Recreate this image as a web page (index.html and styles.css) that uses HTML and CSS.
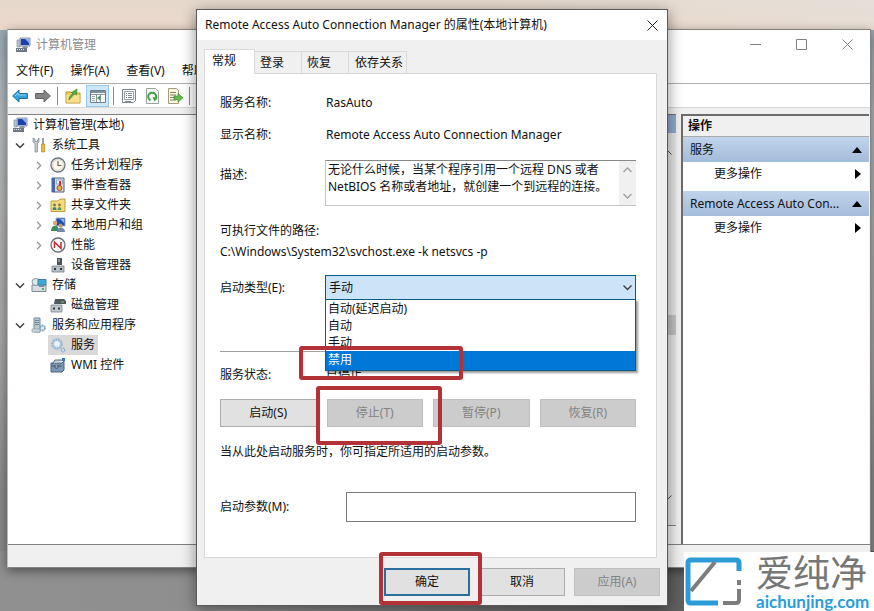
FILE: index.html
```html
<!DOCTYPE html>
<html lang="zh-CN">
<head>
<meta charset="utf-8">
<title>计算机管理</title>
<link rel="stylesheet" href="styles.css">
</head>
<body>
<svg class="defs" aria-hidden="true">
  <defs>
    <symbol id="i-computer" viewBox="0 0 16 16">
      <path d="M5 1h10v8H5z" fill="#c9d3e2" stroke="#6f7f98" stroke-width=".8"/>
      <path d="M6 2h8v6H6z" fill="#1f3fae"/><path d="M10 2h4v4z" fill="#86aef0"/>
      <path d="M8 9h4l1 2H7z" fill="#8d97a5"/>
      <path d="M2 3h3v7H2z" fill="#b7c3d2" stroke="#76879a" stroke-width=".6"/>
      <path d="M1 11h11v4H1z" fill="#6c7886"/><path d="M2 12h1v1H2zM4 12h1v1H4zM6 12h1v1H6zM8 12h1v1H8zM3 14h6" fill="#e7edf3"/>
    </symbol>
    <symbol id="i-open" viewBox="0 0 12 9"><path d="M2 2.500l4 4 4-4" fill="none" stroke="#404040" stroke-width="1.500"/></symbol>
    <symbol id="i-shut" viewBox="0 0 12 9"><path d="M4 .8l3.700 3.700L4 8.200" fill="none" stroke="#9a9a9a" stroke-width="1.300"/></symbol>
  </defs>
</svg>

<main class="desktop">
  <section class="console" aria-label="计算机管理">
    <header class="console-title">
      <svg class="icon"><use href="#i-computer"/></svg>
      <h1>计算机管理</h1>
      <div class="controls">
        <button aria-label="最小化"><svg viewBox="0 0 11 11"><path d="M0 5.500h11"/></svg></button>
        <button aria-label="最大化"><svg viewBox="0 0 11 11"><path d="M.5.5h10v10H.5z"/></svg></button>
        <button aria-label="关闭"><svg viewBox="0 0 11 11"><path d="M.5.5l10 10M10.500.5l-10 10"/></svg></button>
      </div>
    </header>
    <nav class="menubar">
      <button>文件(F)</button><button>操作(A)</button><button>查看(V)</button><button>帮助(H)</button>
    </nav>
    <div class="toolbar">
      <button aria-label="后退"><svg viewBox="0 0 16 16"><path d="M.6 8l6.400-6v3.500h8.400v5H7V14z" fill="#35a4dd" stroke="#1d6d9f"/><path d="M3 8l3-3v2h8" fill="none" stroke="#8ad4f6"/></svg></button>
      <button aria-label="前进"><svg viewBox="0 0 16 16"><path d="M15.400 8L9 2v3.500H.6v5H9V14z" fill="#858585" stroke="#606060"/></svg></button>
      <span class="rule"></span>
      <button aria-label="上一级"><svg viewBox="0 0 16 16"><path d="M1 4h5l1 1h8v10H1z" fill="#f0d064" stroke="#b89435"/><path d="M1.500 7h13v7.500h-13z" fill="#f8e08a"/><path d="M4 12c0-4 2-5 4-6L6.500 4.500 12 1l-.5 6L10 6c-2 1-3.500 3-6 6z" fill="#55ad3c" stroke="#2f7c22" stroke-width=".6"/></svg></button>
      <button class="on" aria-label="显示/隐藏控制台树"><svg viewBox="0 0 16 16"><path d="M.5 2.500h15v12H.5z" fill="#fff" stroke="#6e7c88"/><path d="M1 3h14v2H1z" fill="#7d8e9d"/><path d="M1 6.500h14M6.500 6.500v8M10.500 6.500v8" stroke="#8795a1"/><path d="M2 8.500h3M2 10.500h3M2 12.500h3" stroke="#9aa6b0"/><path d="M10 7.500v5L7 10z" fill="#3da438"/></svg></button>
      <span class="rule"></span>
      <button aria-label="属性"><svg viewBox="0 0 16 16"><path d="M1.500 1.500h13v11l-2 2h-11z" fill="#f4f6f8" stroke="#7d868e"/><path d="M3.500 3.500h9v8h-9z" fill="#fff" stroke="#98a1a9"/><path d="M5 5.500h1M7 5.500h4M5 7.500h1M7 7.500h4M5 9.500h1M7 9.500h4M4 13.500h6" stroke="#7d868e"/></svg></button>
      <button aria-label="刷新"><svg viewBox="0 0 16 16"><path d="M2.500.5h9l3 3v12h-12z" fill="#f6f8f6" stroke="#9aa29a"/><path d="M6.500 12.300A4 4 0 1 1 11 11.500" fill="none" stroke="#3fa047" stroke-width="2"/><path d="M8.500 9l5 .5-3 4z" fill="#3fa047"/></svg></button>
      <button aria-label="导出列表"><svg viewBox="0 0 16 16"><path d="M1.500.5h8l2 2v13h-10z" fill="#fbf8e6" stroke="#a39c74"/><path d="M3 4.500h6M3 7h6M3 9.500h4M3 12h6" stroke="#857e5b"/><path d="M7 8h4V5.500l5 4.200-5 4.300v-2.500H7z" fill="#5fbb4b" stroke="#3b8d2c" stroke-width=".6"/></svg></button>
      <span class="rule"></span>
    </div>

    <div class="panes">
      <ul class="tree">
        <li><svg class="icon"><use href="#i-computer"/></svg>计算机管理(本地)</li>
        <li class="l1"><svg class="twist"><use href="#i-open"/></svg><svg class="icon" viewBox="0 0 16 16"><path d="M2 1v4l2 1.500V15h2.500V6.500L8 5V1L6.500 3v1.500h-2.500V2z" fill="#c3c9ce" stroke="#7b848c" stroke-width=".7"/><path d="M11 1h2v6h-2z" fill="#98a1a8"/><path d="M10.500 7h3v8h-3z" fill="#efb638" stroke="#b07c1b" stroke-width=".6"/></svg>系统工具</li>
        <li class="l2"><svg class="twist"><use href="#i-shut"/></svg><svg class="icon" viewBox="0 0 16 16"><circle cx="8" cy="8" r="7" fill="#e9edf2" stroke="#6d7580" stroke-width="1.300"/><circle cx="8" cy="8" r="5.300" fill="#fff8e4" stroke="#c9c6b6" stroke-width=".6"/><path d="M8 4v4.500h3.500" fill="none" stroke="#5c6370" stroke-width="1.200"/></svg>任务计划程序</li>
        <li class="l2"><svg class="twist"><use href="#i-shut"/></svg><svg class="icon" viewBox="0 0 16 16"><path d="M2 1h12v14H2z" fill="#d5dfea" stroke="#53637d"/><path d="M2 1h3v14H2z" fill="#4966a5"/><path d="M6.500 3h6v4h-6z" fill="#eaf0f7" stroke="#7289ad" stroke-width=".6"/><path d="M9 4h2v5H9z" fill="#cf342c"/><circle cx="9.500" cy="11" r="2.500" fill="#e5b44c" stroke="#b94434"/></svg>事件查看器</li>
        <li class="l2"><svg class="twist"><use href="#i-shut"/></svg><svg class="icon" viewBox="0 0 16 16"><path d="M1 4h7l2-2h5v12.500H1z" fill="#f4dd7c" stroke="#bd9d43"/><circle cx="4.500" cy="8" r="1.400" fill="#687b57"/><path d="M2.500 13c0-4 4-4 4 0z" fill="#467b8a"/><circle cx="9.500" cy="8" r="1.400" fill="#9a7440"/><path d="M7.500 13c0-4 4-4 4 0z" fill="#5c9650"/></svg>共享文件夹</li>
        <li class="l2"><svg class="twist"><use href="#i-shut"/></svg><svg class="icon" viewBox="0 0 16 16"><path d="M6 1h9v8H6z" fill="#244cae" stroke="#9aabc8"/><path d="M10 2h4v4z" fill="#8eb4ee"/><circle cx="5" cy="6" r="2.300" fill="#d7a774"/><path d="M1 14c0-7 8-7 8 0z" fill="#3c8b5a"/><circle cx="10.500" cy="8.500" r="2" fill="#c99864"/><path d="M7 15c0-6 8-6 8 0z" fill="#7487ad"/></svg>本地用户和组</li>
        <li class="l2"><svg class="twist"><use href="#i-shut"/></svg><svg class="icon" viewBox="0 0 16 16"><circle cx="8" cy="8" r="7" fill="#f6f6f6" stroke="#686e76" stroke-width="1.300"/><path d="M4.500 11V5l6.500 6.500V5" fill="none" stroke="#c22e32" stroke-width="1.500"/></svg>性能</li>
        <li class="l2"><i class="twist"></i><svg class="icon" viewBox="0 0 16 16"><path d="M7 1h5v7H7z" fill="#4b5258"/><path d="M8 2h2v3H8z" fill="#89929a"/><path d="M2 9h12v6H2z" fill="#b8bfc6" stroke="#757d86" stroke-width=".8"/><path d="M4 11h2v2H4zM10 11h2v2h-2z" fill="#30363b"/></svg>设备管理器</li>
        <li class="l1"><svg class="twist"><use href="#i-open"/></svg><svg class="icon" viewBox="0 0 16 16"><path d="M1 8h14v6.500H1z" fill="#d5dce2" stroke="#7c8c99"/><ellipse cx="5" cy="5" rx="4" ry="3.500" fill="#dfe6ea" stroke="#8a98a2"/><path d="M7 2.500h8v5.500H7z" fill="#3fa9d6" stroke="#337fa8"/><path d="M8 8.500h5v1.500H8z" fill="#7b8b97"/><path d="M11 12h2" stroke="#2da049" stroke-width="1.500"/></svg>存储</li>
        <li class="l2"><i class="twist"></i><svg class="icon" viewBox="0 0 16 16"><path d="M5 2h9l2 2v3H4z" fill="#50575d"/><path d="M11 5h3" stroke="#67cd74"/><path d="M1 8h11v7H1z" fill="#bfc6cc" stroke="#7c848c" stroke-width=".8"/><path d="M3 10.500h2v2H3zM8 10.500h2v2H8z" fill="#30363b"/></svg>磁盘管理</li>
        <li class="l1"><svg class="twist"><use href="#i-open"/></svg><svg class="icon" viewBox="0 0 16 16"><path d="M3 1h6v14H3z" fill="#b8c8d3" stroke="#74899a"/><path d="M4 3.500h4M4 5.500h4M4 7.500h4" stroke="#6f8798"/><path d="M1 12h8v3H1z" fill="#cdd7df" stroke="#8496a3" stroke-width=".6"/><circle cx="11.500" cy="11" r="2.500" fill="#e5eef5" stroke="#7da3be" stroke-width="1.800" stroke-dasharray="2 .6"/></svg>服务和应用程序</li>
        <li class="l2"><i class="twist"></i><span class="picked"><svg class="icon" viewBox="0 0 16 16"><circle cx="7" cy="7" r="4.500" fill="#dcebf5" stroke="#92b6d0" stroke-width="2.500" stroke-dasharray="2 .7"/><circle cx="7" cy="7" r="3.500" fill="#eaf3f9" stroke="#a6c4d8"/><circle cx="13" cy="13" r="1.700" fill="#dcebf5" stroke="#86aac4" stroke-width="1.400" stroke-dasharray="1.300 .5"/></svg>服务</span></li>
        <li class="l2"><i class="twist"></i><svg class="icon" viewBox="0 0 16 16"><path d="M1 6h11l2-2v9l-2 2H1z" fill="#7d98b4" stroke="#4b627a"/><path d="M3 6l2-3h7l2 1" fill="#c7d5e1" stroke="#51677e"/><path d="M1.500 9h10M5 8v3h3V8" fill="#e4ecf2" stroke="#3d5268"/><path d="M12 1h3v3h-3z" fill="#3577ba"/></svg>WMI 控件</li>
      </ul>

      <div class="listing" aria-hidden="true">
        <div class="listing-head"></div>
        <div class="listing-scroll">
          <svg viewBox="0 0 9 6"><path d="M.5 5.500l4-4 4 4"/></svg>
          <span></span>
          <svg viewBox="0 0 9 6"><path d="M.5.5l4 4 4-4"/></svg>
        </div>
        <div class="listing-foot"></div>
      </div>

      <aside class="actions">
        <h2>操作</h2>
        <h3><span>服务</span><svg viewBox="0 0 10 6"><path d="M0 6l5-6 5 6z"/></svg></h3>
        <button>更多操作<svg viewBox="0 0 6 10"><path d="M0 0l6 5-6 5z"/></svg></button>
        <h3><span>Remote Access Auto Con...</span><svg viewBox="0 0 10 6"><path d="M0 6l5-6 5 6z"/></svg></h3>
        <button>更多操作<svg viewBox="0 0 6 10"><path d="M0 0l6 5-6 5z"/></svg></button>
      </aside>
    </div>
    <footer class="statusbar"></footer>
  </section>

  <form class="dialog" role="dialog" aria-labelledby="dlg-title">
    <header class="dialog-title">
      <h2 id="dlg-title">Remote Access Auto Connection Manager 的属性(本地计算机)</h2>
      <button type="button" aria-label="关闭"><svg viewBox="0 0 11 11"><path d="M.5.5l10 10M10.500.5l-10 10"/></svg></button>
    </header>
    <div class="tabs" role="tablist">
      <button type="button" role="tab" aria-selected="true">常规</button>
      <button type="button" role="tab" aria-selected="false">登录</button>
      <button type="button" role="tab" aria-selected="false">恢复</button>
      <button type="button" role="tab" aria-selected="false">依存关系</button>
    </div>
    <div class="sheet">
      <div class="row"><span>服务名称:</span><span>RasAuto</span></div>
      <div class="row name"><span>显示名称:</span><span>Remote Access Auto Connection Manager</span></div>
      <div class="row about">
        <label for="desc">描述:</label>
        <div class="memo">
          <textarea id="desc" readonly>无论什么时候，当某个程序引用一个远程 DNS 或者 NetBIOS 名称或者地址，就创建一个到远程的连接。</textarea>
          <div class="memo-scroll"><svg viewBox="0 0 9 6"><path d="M.5 5l4-4 4 4"/></svg><svg viewBox="0 0 9 6"><path d="M.5 1l4 4 4-4"/></svg></div>
        </div>
      </div>
      <p class="path-label">可执行文件的路径:</p>
      <p class="path">C:\Windows\System32\svchost.exe -k netsvcs -p</p>
      <div class="row start">
        <label for="start">启动类型(E):</label>
        <div class="combo">
          <select id="start"><option>手动</option></select>
          <svg class="drop" viewBox="0 0 9 6"><path d="M.5.5l4 4 4-4"/></svg>
          <ul class="choices" role="listbox">
            <li role="option">自动(延迟启动)</li>
            <li role="option">自动</li>
            <li role="option">手动</li>
            <li role="option" aria-selected="true">禁用</li>
          </ul>
          <span class="mark mark-choice"></span>
        </div>
      </div>
      <hr>
      <div class="row"><span>服务状态:</span><span>已停止</span></div>
      <div class="service-buttons">
        <button type="button">启动(S)</button>
        <span class="marked"><button type="button" disabled>停止(T)</button><span class="mark mark-stop"></span></span>
        <button type="button" disabled>暂停(P)</button>
        <button type="button" disabled>恢复(R)</button>
      </div>
      <p class="hint">当从此处启动服务时，你可指定所适用的启动参数。</p>
      <div class="row params"><label for="params">启动参数(M):</label><input id="params" type="text"></div>
    </div>
    <footer class="dialog-foot">
      <span class="marked"><button type="button" class="ok">确定</button><span class="mark mark-ok"></span></span>
      <button type="button">取消</button>
      <button type="button" disabled>应用(A)</button>
    </footer>
  </form>

  <div class="brand">
    <svg viewBox="0 0 58 50">
      <path d="M54 14V6q0-3-3-3H6Q3 3 3 6v37q0 3 3 3h27" fill="none" stroke="#2b9cd8" stroke-width="5"/>
      <path d="M38 46h13q3 0 3-3V32M54 28v-5M6 34L30 5" fill="none" stroke="#7d7d7d" stroke-width="4"/>
    </svg>
    <div><strong>爱纯净</strong><span>aichunjing.com</span></div>
  </div>
</main>
</body>
</html>
```

FILE: styles.css
```css
* { box-sizing: border-box; margin: 0; padding: 0; }
body {
  font: 12px/16px "Noto Sans", "Noto Sans CJK SC", sans-serif;
  color: #111;
}
button, input, select, textarea { font: inherit; color: inherit; border: 0; background: none; border-radius: 0; }
ul { list-style: none; }
h1, h2, h3 { font: inherit; }
.defs { position: absolute; width: 0; height: 0; }

.desktop {
  position: relative;
  min-height: 100vh;
  overflow: hidden;
  background:
    linear-gradient(12deg, transparent 60%, #e6dfd8 100%) top / 100% 30px no-repeat,
    linear-gradient(#e5d9cc, #ecd9cc) top / 100% 30px no-repeat,
    linear-gradient(90deg, #909090 0, #8e8e8e 25%, #606060 75%, #5c5c5c) bottom / 100% 60px no-repeat,
    linear-gradient(#8fa5b3 0, #b4b8ba 20%, #a8a6a5 55%, #8a8a8a 80%);
}

/* management console window */
.console {
  position: absolute;
  inset: 29px 3px 43px 7px;
  display: flex;
  flex-direction: column;
  background: #f0f0f0;
  border: 1px solid #858585;
  border-left-color: #bbb;
  box-shadow: 0 3px 10px rgba(0, 0, 0, .45);
}
.console-title { display: flex; align-items: center; height: 29px; padding-left: 7px; background: #fff; color: #8c8c8c; }
.console-title h1 { flex: 1; margin-left: 5px; }
.icon { width: 16px; height: 16px; flex: none; }
.controls { display: flex; }
.controls button { width: 46px; height: 28px; display: grid; place-items: center; }
.controls svg, .dialog-title svg { width: 11px; height: 11px; fill: none; stroke: #808080; }
.menubar { display: flex; gap: 17px; height: 24px; padding-left: 8px; background: #fff; }
.menubar button { white-space: nowrap; }
.toolbar {
  display: flex; align-items: center; height: 25px; gap: 3px; padding-left: 2px;
  background: #fff; border-top: 1px solid #b0b0b0; border-bottom: 1px solid #d8d8d8;
}
.toolbar button { width: 20px; height: 22px; display: grid; place-items: center; }
.toolbar svg { width: 16px; height: 16px; }
.toolbar .on { width: 23px; background: #cce8ff; border: 1px solid #99c9ef; }
.toolbar .rule { width: 1px; height: 18px; margin: 0 2px 0 1px; background: #8a8a8a; }

.panes { flex: 1; display: flex; margin-top: 6px; min-height: 0; border-bottom: 1px solid #808080; }
.tree { width: 260px; padding: 0 4px; background: #fff; border-top: 1px solid #808080; }
.tree li { display: flex; align-items: center; gap: 5px; height: 20px; white-space: nowrap; }
.tree .l1 { padding-left: 2px; }
.tree .l2 { padding-left: 21px; }
.twist { width: 12px; height: 9px; flex: none; }
.picked { display: flex; align-items: center; gap: 5px; height: 20px; padding: 0 3px 0 2px; margin: 0 0 0 -2px; background: #d9d9d9; }

.listing { flex: 1; display: flex; flex-direction: column; align-items: flex-end; margin-right: 5px; }
.listing-head { align-self: stretch; height: 19px; background: #8fa9cb; border-top: 1px solid #707070; }
.listing-scroll { flex: 1; width: 17px; display: flex; flex-direction: column; align-items: center; justify-content: space-between; padding: 16px 0 24px; background: #e6e6e6; }
.listing-scroll span { align-self: stretch; height: 20px; background: #c2c2c2; }
.listing-scroll svg { width: 9px; height: 6px; fill: none; stroke: #505050; }
.listing-foot { align-self: stretch; height: 19px; border-top: 1px solid #808080; }

.actions { width: 188px; margin-right: 1px; background: #fff; border-left: 2px solid #6c6c6c; border-top: 2px solid #6c6c6c; }
.actions h2 { height: 21px; padding: 2px 5px; background: #f0f0f0; border-bottom: 1px solid #aaa; font-weight: 700; }
.actions h3 { display: flex; align-items: center; justify-content: space-between; height: 25px; padding: 0 7px; background: linear-gradient(#c0d4ea, #a3bcdb); white-space: nowrap; }
.actions h3 svg { width: 10px; height: 6px; }
.actions button { display: flex; align-items: center; justify-content: space-between; width: 100%; height: 24px; margin-bottom: 5px; padding: 0 8px 0 31px; }
.actions button svg { width: 6px; height: 10px; }
.statusbar { height: 22px; }

/* service properties dialog */
.dialog {
  position: absolute;
  left: 196px; top: 9px;
  width: 472px;
  background: #f0f0f0;
  border: 1px solid #5a5a5a;
  box-shadow: 0 3px 14px rgba(0, 0, 0, .45);
}
.dialog-title { display: flex; align-items: center; justify-content: space-between; height: 30px; padding-left: 8px; background: #fff; }
.dialog-title button { width: 30px; height: 28px; display: grid; place-items: center; }
.dialog-title svg { stroke: #222; }
.tabs { display: flex; align-items: flex-end; height: 33px; padding: 0 7px; }
.tabs button { height: 22px; padding: 0 0 0 5px; width: 47px; text-align: left; border: 1px solid #d9d9d9; border-left: 0; border-bottom: 0; }
.tabs button:last-child { width: 58px; padding-left: 6px; }
.tabs [aria-selected="true"] { height: 25px; width: 51px; padding: 0 0 2px 7px; margin-bottom: -1px; background: #fff; border-left: 1px solid #d9d9d9; z-index: 1; }
.sheet { margin: 0 10px 0 7px; padding: 21px 20px 35px 15px; background: #fff; border: 1px solid #d9d9d9; }
.row { display: grid; grid-template-columns: 105px 1fr; }
.row > span:last-child { padding-left: 1px; }
.name { margin-top: 16px; }
.about { margin-top: 17px; }
.about label { padding-top: 7px; }
.memo { display: flex; height: 46px; border: 1px solid #c4c4c4; border-right: 0; border-top-color: #888; }
.memo textarea { flex: 1; min-width: 0; padding: 0 2px; resize: none; overflow: hidden; line-height: 17px; }
.memo-scroll { width: 17px; display: flex; flex-direction: column; align-items: center; justify-content: space-between; padding: 6px 0; background: #f0f0f0; }
.memo-scroll svg, .drop { width: 9px; height: 6px; fill: none; stroke: #a0a0a0; stroke-width: 1.4; }
.path-label { margin-top: 17px; }
.path { margin-top: 5px; }
.start { margin-top: 15px; align-items: center; }
.combo { position: relative; }
.combo select { display: block; width: 100%; height: 25px; padding: 0 3px; appearance: none; background: #cce4f7; border: 1px solid #005a8c; }
.drop { position: absolute; right: 4px; top: 10px; stroke: #404040; }
.choices { position: absolute; top: 24px; left: 0; right: 0; height: 72px; background: #fff; border: 1px solid #0a5c80; box-shadow: 2px 2px 2px rgba(0, 0, 0, .4); }
.choices li { height: 17px; line-height: 17px; padding-left: 2px; }
.choices [aria-selected="true"] { height: 19px; background: #0078d7; color: #fff; }
hr { border: 0; height: 1px; margin: 51px 0 15px; background: #a0a0a0; }
.service-buttons { display: grid; grid-template-columns: repeat(4, 1fr); gap: 10px; margin-top: 16px; }
.service-buttons button, .dialog-foot button { width: 100%; height: 28px; background: #e1e1e1; border: 1px solid #adadad; }
.dialog button:disabled { background: #ccc; border-color: #bfbfbf; color: #838383; }
.hint { margin-top: 17px; }
.params { grid-template-columns: 126px 1fr; margin-top: 32px; align-items: center; }
.params input { width: 100%; height: 30px; padding: 0 4px; border: 1px solid #7a7a7a; }
.dialog-foot { display: grid; grid-template-columns: repeat(3, 86px); gap: 9px; justify-content: end; padding: 10px 7px 9px; }
.dialog-foot .ok { border: 2px solid #2a6f9e; }

/* highlight frames */
.marked { position: relative; }
.mark { position: absolute; border: 4px solid #b23238; border-radius: 3px; pointer-events: none; }
.mark-choice { left: -26px; top: 71px; width: 164px; height: 34px; }
.mark-stop { inset: -13px -19px -18px -11px; }
.mark-ok { inset: -16px -12px -9px -5px; }

.brand { position: absolute; right: 0; bottom: 0; display: flex; align-items: center; gap: 13px; width: 190px; height: 59px; padding-left: 1px; background: #fff; }
.brand svg { width: 58px; height: 50px; flex: none; }
.brand strong { display: block; font-size: 37px; line-height: 40px; font-weight: 400; color: #777; white-space: nowrap; }
.brand span { display: block; font: 700 17px/17px Lato, sans-serif; color: #2b9cd8; }
```
